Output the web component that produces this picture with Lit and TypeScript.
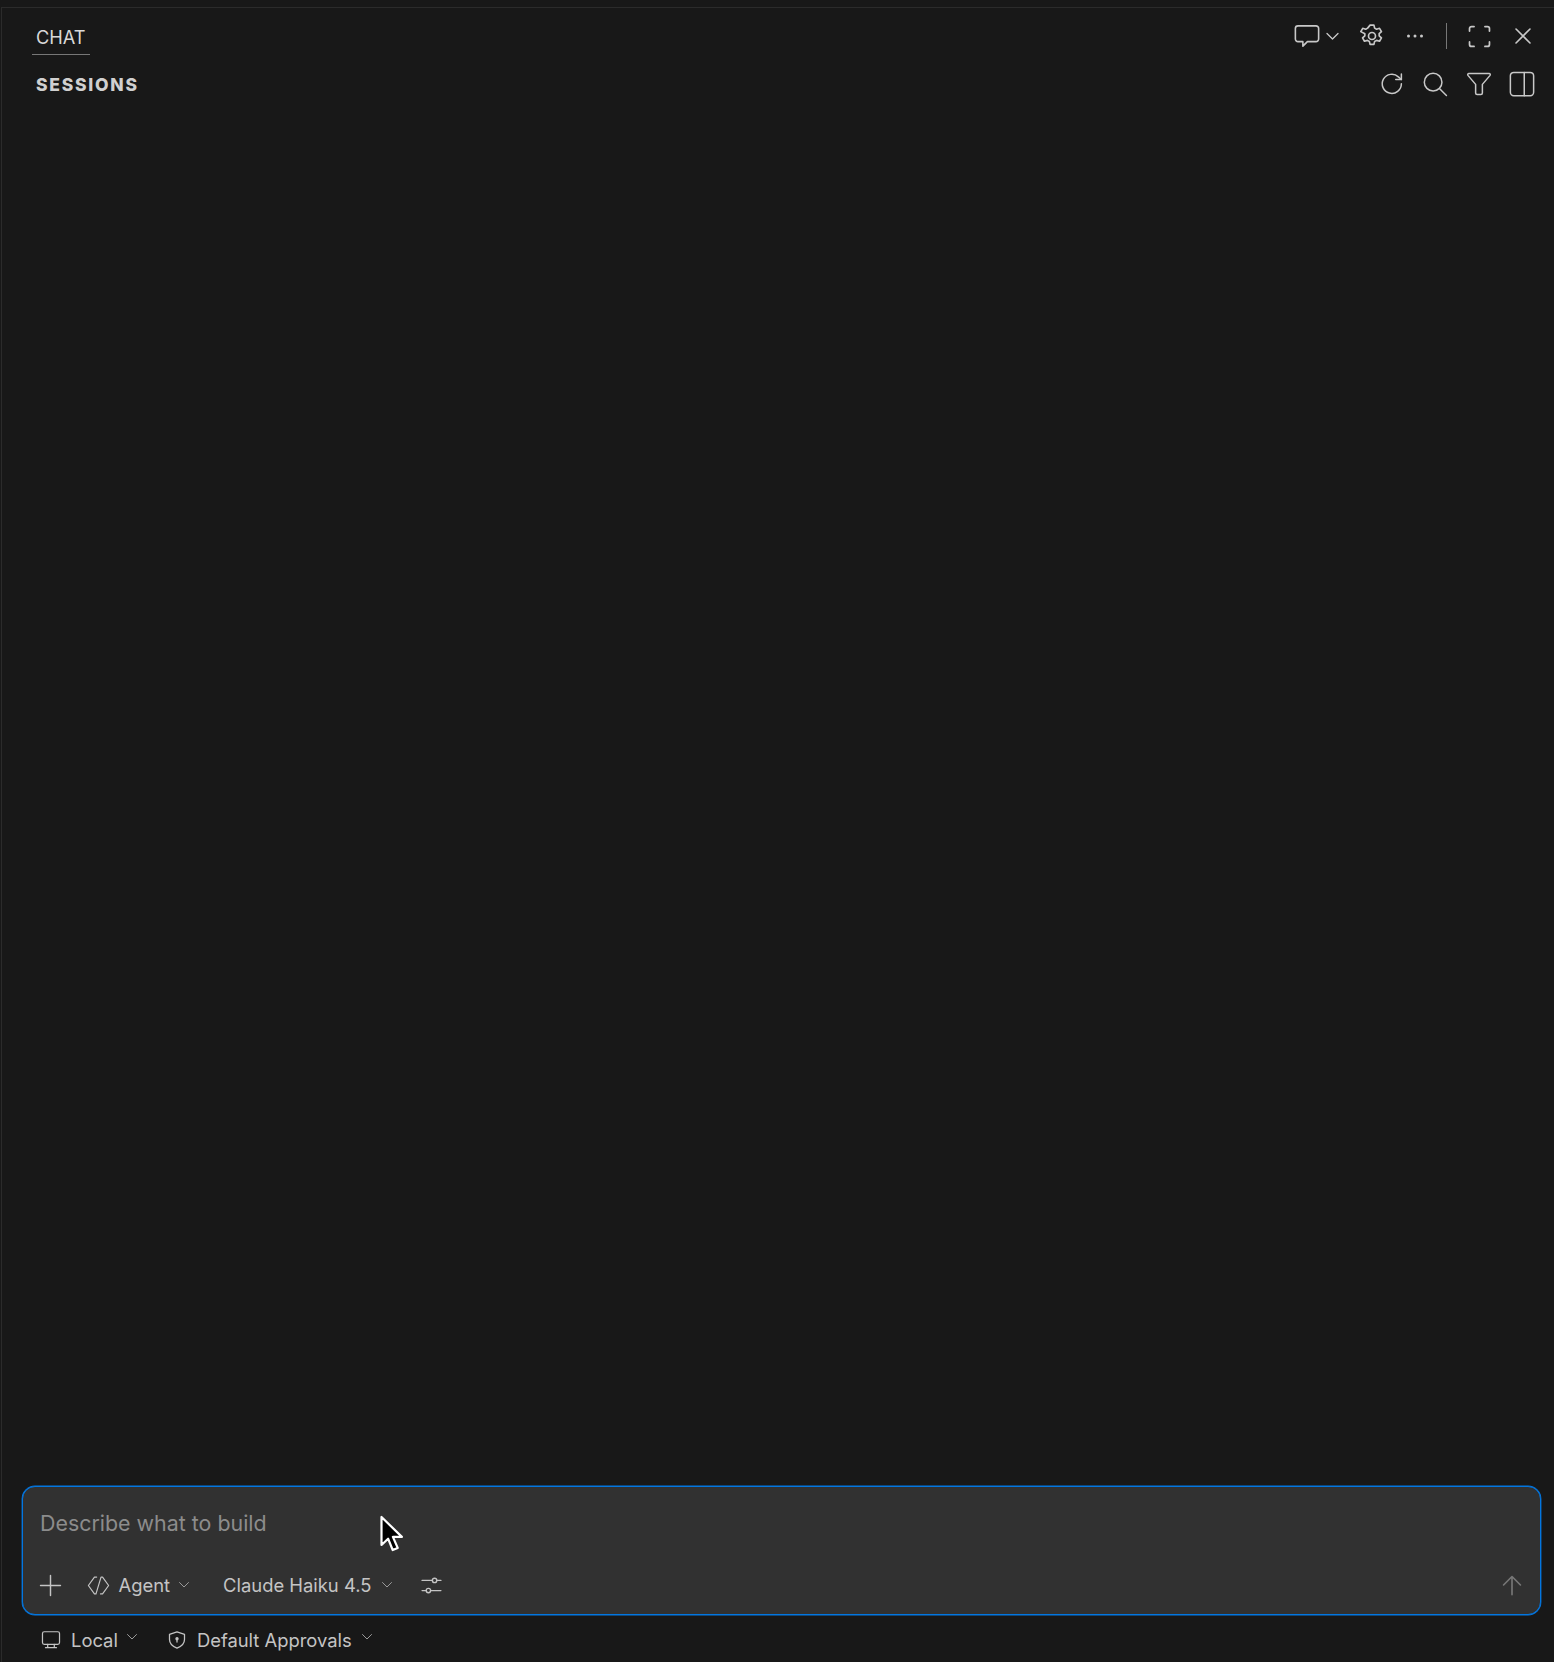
import { LitElement, html, css, svg } from "lit";
import { customElement } from "lit/decorators.js";

const ic = (size: number, body: unknown, sw = 1.15) => html`<svg class="ic" width=${size} height=${size} viewBox="0 0 16 16" fill="none" stroke="currentColor" stroke-width=${sw} stroke-linecap="round" stroke-linejoin="round">${body}</svg>`;

const chev = html`<svg class="chev" width="12" height="8" viewBox="0 0 12 8" fill="none" stroke="currentColor" stroke-width="1" stroke-linecap="round" stroke-linejoin="round"><path d="M1.5 1.5 6 6l4.5-4.5"/></svg>`;

@customElement("app-root")
export class AppRoot extends LitElement {
  static styles = css`
    :host { display: block; width: 1554px; height: 1662px; font-family: Inter, "Liberation Sans", sans-serif; }
    .page { position: relative; box-sizing: border-box; width: 1554px; height: 1662px; background: #181818; color: #ccc; display: flex; flex-direction: column; padding-top: 7px; }
    .frame { flex: 1; display: flex; flex-direction: column; min-height: 0; border-top: 1px solid #2b2b2b; border-left: 1px solid #2b2b2b; margin-left: 1px; }
    .head { height: 55px; display: flex; align-items: center; justify-content: space-between; padding: 0 19px 0 30px; }
    .tab { box-sizing: border-box; height: 34px; margin-top: 4px; padding: 0 4px; display: flex; align-items: center; font-size: 18.2px; color: #d8d8d8; border-bottom: 1px solid #777; }
    .tools { display: flex; align-items: center; color: #c8c8c8; }
    .head .tools { margin-top: 1px; }
    .sess { height: 42px; display: flex; align-items: center; justify-content: space-between; padding: 0 20px 0 34px; }
    .sess b { font-size: 17.5px; font-weight: 800; letter-spacing: 1.75px; color: #d0d0d0; }
    .btn { width: 24px; height: 24px; display: flex; align-items: center; justify-content: center; }
    .btn + .btn { margin-left: 19px; }
    .sess .btn + .btn { margin-left: 19.5px; }
    .btn.close { margin-left: 20px; }
    .sep + .btn { margin-left: 0; }
    .ic { display: block; flex: none; }
    .chatbtn { display: flex; align-items: center; gap: 3px; margin-right: 20px; }
    .sep { width: 1px; height: 26px; background: #777; margin: 0 20px 0 19px; }
    .spacer { flex: 1; }
    .input { box-sizing: border-box; margin: 0 13px 0 20px; height: 129px; background: #313131; border: 1px solid #0376e0; box-shadow: 0 0 0 .4px #0376e0; border-radius: 13px; padding: 22px 16px 0 17px; display: flex; flex-direction: column; }
    .ph { font-size: 21.4px; line-height: 28px; color: #8c8c8c; }
    .bar { margin-top: 33px; display: flex; align-items: center; color: #c4c4c4; font-size: 18.4px; height: 30px; }
    .pick { display: flex; align-items: center; }
    .chev { color: #9a9a9a; flex: none; }
    .plus { margin-left: -4px; display: flex; }
    .agent { margin-left: 20px; }
    .agent-label { margin-left: 6.5px; }
    .model { margin-left: 33px; }
    .caret { margin-left: 8px; display: flex; }
    .model .caret { margin-left: 9.5px; }
    .sliders { margin-left: 24px; }
    .send { color: #777; margin-right: -1px; }
    .foot { height: 47px; padding: 3px 0 0 38px; display: flex; align-items: center; font-size: 18.4px; color: #c4c4c4; box-sizing: border-box; }
    .foot .caret { margin-top: -6px; }
    .foot .caret.last { margin-left: 9px; }
    .local { margin-left: 9px; }
    .shield { margin-left: 27px; display: flex; }
    .approvals { margin-left: 8px; }
    .cursor { position: absolute; left: 379px; top: 1515px; }
  `;

  render() {
    return html`<div class="page"><div class="frame">
      <div class="head">
        <div class="tab">CHAT</div>
        <div class="tools">
          <div class="chatbtn">
            ${ic(30, svg`<path d="M3.2 2.6h9.6a1.4 1.4 0 0 1 1.4 1.4v5.6a1.4 1.4 0 0 1-1.4 1.4H8.2L5.8 13.4v-2.4H3.2a1.4 1.4 0 0 1-1.4-1.4V4a1.4 1.4 0 0 1 1.4-1.4z"/>`, 0.85)}
            ${html`<svg width="15" height="9" viewBox="0 0 15 9" fill="none" stroke="currentColor" stroke-width="1.3" stroke-linecap="round" stroke-linejoin="round"><path d="M2 1.5 7.5 7 13 1.5"/></svg>`}
          </div>
          <div class="btn">${ic(28, svg`<circle cx="8" cy="8" r="2"/><path d="M6.9 1.8h2.2l.4 1.7 1.1.6 1.7-.5 1.1 1.9-1.3 1.2v1.2l1.3 1.2-1.1 1.9-1.7-.5-1.1.6-.4 1.7H6.9l-.4-1.7-1.1-.6-1.7.5-1.1-1.9 1.3-1.2V6.7L1.6 5.5l1.1-1.9 1.7.5 1.1-.6z"/>`, 0.95)}</div>
          <div class="btn">${html`<svg class="ic" width="24" height="24" viewBox="0 0 24 24" fill="currentColor"><circle cx="5.5" cy="12" r="1.5"/><circle cx="12" cy="12" r="1.5"/><circle cx="18.5" cy="12" r="1.5"/></svg>`}</div>
          <div class="sep"></div>
          <div class="btn">${ic(29, svg`<path d="M2.5 5V3.6a1.1 1.1 0 0 1 1.1-1.1H5M11 2.5h1.4a1.1 1.1 0 0 1 1.1 1.1V5M13.5 11v1.4a1.1 1.1 0 0 1-1.1 1.1H11M5 13.5H3.6a1.1 1.1 0 0 1-1.1-1.1V11"/>`, 0.95)}</div>
          <div class="btn close">${ic(26, svg`<path d="M3.7 3.7l8.6 8.6M12.3 3.7l-8.6 8.6"/>`, 1)}</div>
        </div>
      </div>
      <div class="sess">
        <b>SESSIONS</b>
        <div class="tools">
          <div class="btn">${ic(30, svg`<path d="M13 7.9A5.1 5.1 0 1 1 11.4 4.2L13 5.6"/><path d="M13 2.6v3H10"/>`, 0.8)}</div>
          <div class="btn">${ic(30, svg`<circle cx="7" cy="7" r="4.7"/><path d="M10.5 10.5l3.6 3.6"/>`, 0.8)}</div>
          <div class="btn">${ic(30, svg`<path d="M2.6 2.4h10.8c.5 0 .8.6.5 1L9.8 8.2v4.6c0 .5-.3.8-.8.8H7c-.5 0-.8-.3-.8-.8V8.2L2.1 3.4c-.3-.4 0-1 .5-1z"/>`, 0.8)}</div>
          <div class="btn">${ic(30, svg`<rect x="1.8" y="1.8" width="12.4" height="12.4" rx="1.8"/><path d="M9.2 1.8v12.4"/>`, 0.8)}</div>
        </div>
      </div>
      <div class="spacer"></div>
      <div class="input">
        <div class="ph">Describe what to build</div>
        <div class="bar">
          <span class="plus">${ic(29, svg`<path d="M8 2.5v11M2.5 8h11"/>`, 0.8)}</span>
          <div class="pick agent">
            ${ic(27, svg`<path d="M6.9 3H5.6L2 8l3.6 5h.9M9.2 13h1.2L14 8l-3.6-5H9.5L6.5 13"/>`, 0.7)}
            <span class="agent-label">Agent</span>
            <span class="caret">${chev}</span>
          </div>
          <div class="pick model">
            <span>Claude Haiku 4.5</span>
            <span class="caret">${chev}</span>
          </div>
          <div class="sliders">${ic(29, svg`<path d="M2.8 5.2h5.7M10.9 5.2h2.3M2.8 10.8h2.3M7.5 10.8h5.7"/><circle cx="9.7" cy="5.2" r="1.2"/><circle cx="6.3" cy="10.8" r="1.2"/>`, 0.75)}</div>
          <div class="spacer"></div>
          <div class="send">${ic(26, svg`<path d="M8 14V2.8M2.8 8 8 2.8 13.2 8"/>`, 1)}</div>
        </div>
      </div>
      <div class="foot">
        ${ic(22, svg`<rect x="1.8" y="2" width="12.4" height="9.2" rx="1.3"/><path d="M5.6 11.2v2.4M10.4 11.2v2.4M4 13.6h8"/>`, 0.9)}
        <span class="local">Local</span>
        <span class="caret">${chev}</span>
        <span class="shield">${ic(24, svg`<path d="M8 2.6 13 4.2v3.4c0 2.8-2 4.6-5 5.8-3-1.2-5-3-5-5.8V4.2z"/><circle cx="8" cy="7.2" r=".7" fill="currentColor"/><path d="M8 7.6v1.8"/>`, 0.85)}</span>
        <span class="approvals">Default Approvals</span>
        <span class="caret last">${chev}</span>
      </div>
    </div>
    <svg class="cursor" width="26" height="38" viewBox="0 0 26 38"><path d="M2.5 2v28l6.6-6.3 4.6 11.3 5-2.1-4.8-11h9z" fill="#000" stroke="#fff" stroke-width="2.2" stroke-linejoin="round"/></svg>
    </div>`;
  }
}
